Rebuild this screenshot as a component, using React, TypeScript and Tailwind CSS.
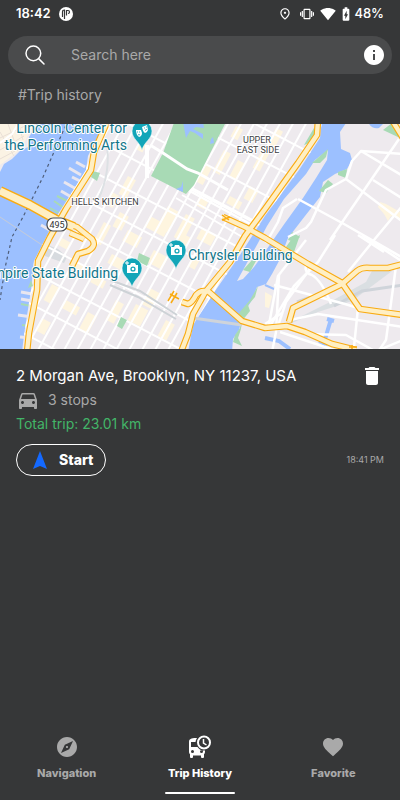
import React, { useState } from 'react';
import {
  MdBatteryChargingFull,
  MdDelete,
  MdDirectionsCar,
  MdExplore,
  MdFavorite,
  MdInfo,
  MdOutlinePlace,
  MdSignalWifi4Bar,
  MdVibration,
} from 'react-icons/md';
import { IoSearchOutline } from 'react-icons/io5';

interface Trip {
  address: string;
  stops: number;
  distance: string;
  time: string;
}

const trip: Trip = {
  address: '2 Morgan Ave, Brooklyn, NY 11237, USA',
  stops: 3,
  distance: '23.01 km',
  time: '18:41 PM',
};

const range = (from: number, to: number, step: number) => {
  const list: number[] = [];
  for (let i = from; i <= to; i += step) list.push(i);
  return list;
};

const manhattan =
  'M106 120 L88 156 L86 170 L58 214 L34 261 L31 290 L24 335 L22 352 L188 352 L193 325 L213 294 L240 255 L265 216 L299 170 L320 138 L322 120 Z';

// [x, y, width, height] of the beige commercial blocks
const blocks = [
  [62, 238, 10, 8], [78, 262, 12, 9], [52, 284, 8, 18], [66, 300, 16, 9], [88, 312, 10, 20],
  [104, 222, 8, 22], [120, 212, 10, 16], [112, 254, 22, 10], [116, 300, 9, 22], [136, 304, 14, 18],
  [128, 230, 16, 12], [150, 216, 22, 12], [168, 206, 12, 24], [186, 214, 10, 26], [202, 228, 16, 12],
  [154, 250, 16, 14], [196, 250, 8, 18], [150, 288, 12, 18], [166, 320, 10, 18], [140, 140, 8, 10],
  [206, 164, 7, 20], [224, 150, 8, 24], [238, 160, 8, 18], [262, 150, 8, 20], [276, 128, 8, 22],
  [128, 176, 9, 20], [112, 192, 8, 14], [42, 318, 10, 14], [230, 196, 14, 8], [250, 186, 10, 14],
  [94, 275, 14, 8], [180, 232, 12, 16], [236, 126, 8, 12], [200, 196, 10, 10],
];

const highways = [
  'M108 120 L94 152 L91 170 L66 209 L50 237 L38 261 L37 290 L29 333 L27 352',
  'M0 191 L30 205 L57 220 L77 227 L92 239 Q97 246 88 251 L78 254 L72 266',
  'M70 233 L84 239',
  'M318 120 L317 135 L298 163 L265 209 L245 236 L230 262 L206 291 L193 314 L188 334 L181 352',
  'M392 120 L403 138',
  'M223 217 L245 227 L265 238 L308 264 L342 283 L360 309 L403 315',
  'M342 284 L357 271 Q362 267 370 268 L388 268 L403 264',
  'M342 284 L293 308 L289 322',
  'M182 302 L188 304 Q192 303 196 295 Q201 289 209 292 L242 321 L265 328 L287 326 L305 332 L332 344 L356 350',
];

const queensRoads = [
  'M288 237 L306 228 L311 222 L326 190 L346 179 L352 161 L361 151 L403 154',
  'M361 151 L403 176', 'M346 179 L403 222', 'M399 139 L330 240', 'M373 180 L403 199',
  'M298 199 L344 224 L403 258', 'M403 205 L374 240 L348 272', 'M335 235 L318 262 L294 286 L270 326',
  'M306 240 L278 276 L268 330', 'M362 235 L403 262', 'M274 285 L345 304 L358 308 L354 347',
  'M279 275 L276 332 L272 352', 'M312 266 L286 302 L278 326', 'M306 265 Q304 273 312 275 Q322 281 331 304',
  'M396 266 L386 340 L378 352', 'M290 320 L318 314 L403 327', 'M305 334 L346 335 L373 350',
  'M280 332 L334 350', 'M265 324 L282 313', 'M403 340 L374 352', 'M358 235 L384 252',
];

const MapPin: React.FC<{ x: number; y: number; kind: 'camera' | 'masks' }> = ({ x, y, kind }) => (
  <g transform={`translate(${x} ${y})`}>
    <path
      d="M0 19 C-2 11 -10 8 -10 0 A10 10 0 0 1 10 0 C10 8 2 11 0 19 Z"
      fill="#12a5b8"
      stroke="#e8f6f8"
      strokeWidth="0.6"
    />
    {kind === 'camera' ? (
      <>
        <path d="M-5 -3 H-2 L-1 -5 H3 L4 -3 H6 V5 H-5 Z" fill="#fff" />
        <circle cx="1" cy="1" r="2.6" fill="#12a5b8" />
        <circle cx="1" cy="1" r="1.3" fill="#fff" />
        <path d="M-5 -7 V-3 M-7 -5 H-3" stroke="#fff" strokeWidth="1" />
      </>
    ) : (
      <>
        <path d="M0 -4 L5 -6 L6 -1 Q5 2 3 2 Q1 1 0 -4 Z" fill="#fff" />
        <path d="M-6 -1 H-1 L0 2 Q0 5 -3 6 Q-6 4 -6 -1 Z" fill="#fff" />
        <path d="M-5 1 h1 M-3 1 h1 M-4 4 q1 -1 2 0 M2 -3 h1 M4 -4 h1 M3 -1 q1 1 2 -1" stroke="#12a5b8" strokeWidth="0.8" fill="none" />
      </>
    )}
  </g>
);

const TripMap: React.FC = () => (
  <svg
    viewBox="0 124 400 225"
    className="block w-full font-['Roboto','Liberation_Sans',sans-serif]"
    role="img"
    aria-label="Map of the trip"
  >
    <defs>
      <clipPath id="manhattan">
        <path d={manhattan} />
      </clipPath>
    </defs>

    <rect x="0" y="120" width="400" height="232" fill="#eeeaee" />

    {/* water */}
    <path d="M38 120 L36 126 L29 137 L28 147 L20 151 L12 159 L4 164 L0 172 V352 H140 V120 Z" fill="#9cc0ff" />
    <path
      d="M321 120 H348 L340 132 L341 149 L350 153 L352 160 L347 169 L335 174 L323 182 L320 197 L305 216 L288 238 L279 261 L272 274 L266 284 L257 287 L252 300 L243 314 L239 330 L233 339 L232 352 H185 L188 320 L213 285 L290 170 L321 130 Z"
      fill="#9cc0ff"
    />
    <path d="M367 120 Q371 130 379 128 L387 120 Z" fill="#9cc0ff" />
    <path d="M265 338 L279 341 L290 349 M323 346 L331 319 M327 319 L334 321 M319 341 L328 344" stroke="#9cc0ff" strokeWidth="4" fill="none" />
    <path d="M265 285 L274 289" stroke="#9cc0ff" strokeWidth="2" />

    {/* New Jersey shore */}
    <path d="M0 120 H36 L27 137 L22 148 L12 156 L0 165 Z" fill="#fbf3e4" />
    <g stroke="#e9dfd6" strokeWidth="1" fill="none">
      <path d="M0 138 L29 124 M0 150 L24 136 M0 132 L14 156 M8 124 L18 151 M18 122 L23 140 M0 159 L15 151" />
      <path d="M0 143 L12 134 L20 121" stroke="#fff" strokeWidth="2" />
    </g>
    <path d="M0 217 L42 245" stroke="#c5cbd8" strokeWidth="1" />
    <path d="M68 120 L43 177 L23 217 L12 237 L5 268 L0 300" stroke="#4f5e7a" strokeWidth="1.2" strokeDasharray="3 3" fill="none" />

    {/* Roosevelt Island */}
    <path d="M328 150 L315 160 L306 174 L284 199 L267 226 L258 243 L237 281 L243 279 L254 267 L262 256 L285 223 L303 198 L316 178 L327 160 Z" fill="#eeeaee" />
    <path d="M328 149 L312 163 L320 163 L326 157 Z M252 260 L243 270 L250 272 L256 261 Z" fill="#a8dab5" />
    <path d="M266 243 L278 222 L283 208 L297 199" stroke="#fff" strokeWidth="2.5" fill="none" />

    {/* piers */}
    <g stroke="#e9e6ef" strokeWidth="3">
      <path d="M76 162 L85 167 M69 168 L81 175 M72 177 L82 182 M64 182 L78 190 M61 191 L73 198 M41 225 L53 232 M21 292 L32 294 M21 299 L32 301 M18 315 L32 317 M20 337 L31 338" />
    </g>
    <path d="M57 196 L69 202 M54 201 L64 208 M50 208 L59 213 M21 304 L31 306 M22 325 L28 326" stroke="#a8dab5" strokeWidth="2" />

    {/* Manhattan */}
    <path d={manhattan} fill="#eeeaee" />
    <g clipPath="url(#manhattan)">
      {blocks.map(([x, y, w, h], index) => (
        <rect key={index} x={x} y={y} width={w} height={h} fill="#fef5df" transform={`rotate(28 ${x} ${y})`} />
      ))}
      <path d="M45 244 L58 249 L67 257 L64 263 L45 256 Z" fill="#d7dbdf" />
      <g stroke="#fff" strokeWidth="2">
        {range(-80, 310, 13).map((x) => (
          <path key={x} d={`M${x} 352 L${x + 128} 120`} />
        ))}
      </g>
      <g stroke="#fff" strokeWidth="2">
        {range(-42, 346, 33).map((y) => (
          <path key={y} d={`M0 ${y} L330 ${y + 172}`} />
        ))}
        <path d="M184 184 L258 223 M186 189 L254 226 M182 195 L248 232 M176 198 L244 238" />
      </g>
      <path d="M110 280 L140 291 L177 315 M110 285 L138 297 L176 319" stroke="#cdd2d6" strokeWidth="2" fill="none" />
      <path d="M106 140 Q112 170 98 200" stroke="#dde1e4" strokeWidth="2" fill="none" />
    </g>
    <path d="M147 145 V178" stroke="#fff" strokeWidth="4" />

    {/* parks */}
    <path d="M175 120 H227 L194 185 L186 194 L151 176 L163 153 Z" fill="#a8dab5" />
    <path d="M183 122 H203 L204 128 L196 127 L193 129 L203 134 L203 139 L195 133 L190 131 L186 138 Z M213 137 L214 143 L210 144 L211 139 Z M183 181 L183 192 L176 189 L181 187 Z" fill="#9cc0ff" />
    <path d="M150 145 L163 153 L187 169 L198 173 L228 190" stroke="#fff" strokeWidth="3" fill="none" />
    <path d="M93 171 L100 173 L97 181 L91 177 Z M121 317 L127 320 L122 329 L117 326 Z M139 253 L150 258 L147 266 L137 261 Z M304 145 L314 128 V136 L307 144 Z M328 180 L333 184 L326 193 L319 191 Z M338 172 L347 169 L346 178 L338 175 Z M292 232 L300 237 L295 242 L288 240 Z M383 130 L392 123 L400 138 Z M291 240 L300 235 L294 252 L286 247 Z" fill="#a8dab5" />
    <path d="M31 280 L33 286 L28 288 Z M258 286 L255 297 L248 305 L250 311 L242 321 L241 329 L238 338 L242 346 L233 342 L235 335 L240 328 L239 313 L250 300 Z" fill="#a8dab5" />

    {/* rail yards */}
    <path d="M290 322 L328 303 L366 282 L372 271 L392 271 L352 301 L318 312 L287 325 Z" fill="#dadfe2" />
    <path d="M334 306 L362 291 L403 285 M297 302 L325 292 M193 318 L242 325" stroke="#cfd4da" strokeWidth="3" fill="none" />
    <path d="M380 202 L386 204 L400 212 L400 219 L391 216 L388 221 L384 214 L378 207 Z M265 292 L272 296 L269 308 L265 307 Z" fill="#fef5df" />

    <g stroke="#fff" strokeWidth="2.5" fill="none" strokeLinejoin="round">
      {queensRoads.map((d) => (
        <path key={d} d={d} />
      ))}
    </g>

    {/* highways */}
    <g stroke="#f9ab12" strokeWidth="6.6" fill="none" strokeLinejoin="round">
      {highways.map((d) => (
        <path key={d} d={d} />
      ))}
      <path d="M0 191 L30 205 L57 220 L74 227" strokeWidth="10" />
    </g>
    <g stroke="#ffefc3" strokeWidth="4.4" fill="none" strokeLinejoin="round">
      {highways.map((d) => (
        <path key={d} d={d} />
      ))}
      <path d="M0 191 L30 205 L57 220 L74 227" strokeWidth="7" />
    </g>
    <path d="M168 301 L174 291 M171 303 L177 293 M170 294 L179 299 M222 215 L229 220 M222 220 L230 217 M352 345 V350 M349 347 H357" stroke="#f9ab12" strokeWidth="1.5" fill="none" />

    <MapPin x={142} y={131} kind="masks" />
    <MapPin x={176} y={250} kind="camera" />
    <MapPin x={132} y={268} kind="camera" />

    <rect x="47" y="218" width="20" height="13" rx="6" fill="#fff" stroke="#4a4f55" strokeWidth="1.2" />
    <text x="57" y="228" fontSize="9" textAnchor="middle" fill="#333">495</text>

    <g fontSize="14" fill="#11758a" stroke="#fff" strokeWidth="2" strokeLinejoin="round" paintOrder="stroke">
      <text x="127" y="133" textAnchor="end">Lincoln Center for</text>
      <text x="127" y="150" textAnchor="end">the Performing Arts</text>
      <text x="118" y="278" textAnchor="end">Empire State Building</text>
      <text x="188" y="260">Chrysler Building</text>
    </g>
    <g fontSize="9" fill="#3c4043" stroke="#fff" strokeWidth="2" strokeLinejoin="round" paintOrder="stroke" textAnchor="middle">
      <text x="105" y="205">HELL'S KITCHEN</text>
      <text x="257" y="143">UPPER</text>
      <text x="258" y="153">EAST SIDE</text>
    </g>
  </svg>
);

const BusClockIcon: React.FC = () => (
  <svg viewBox="0 0 24 24" className="h-6 w-6" aria-hidden="true">
    <path
      d="M8 3 C3 3 1 4 1 7 V17 C1 18 1.4 18.7 2 19.2 V22 Q2 23 3 23 H4 Q5 23 5 22 V20.5 H13 V22 Q13 23 14 23 H15 Q16 23 16 22 V19.2 C16.6 18.7 17 18 17 17 V15.5 A8 8 0 0 1 9.5 12 H3 V7 H7.5 A8 8 0 0 1 9 3 Z M4.500 15 A1.500 1.500 0 1 1 4.500 18 A1.500 1.500 0 1 1 4.500 15 Z M13.500 15 A1.500 1.500 0 1 1 13.500 18 A1.500 1.500 0 1 1 13.500 15 Z"
      fill="currentColor"
      fillRule="evenodd"
    />
    <circle cx="16" cy="7.5" r="6" fill="none" stroke="currentColor" strokeWidth="2" />
    <path d="M15.5 4 V8 L18.5 10" fill="none" stroke="currentColor" strokeWidth="1.5" />
  </svg>
);

const tabs = [
  { name: 'Navigation', icon: <MdExplore className="h-6 w-6" /> },
  { name: 'Trip History', icon: <BusClockIcon /> },
  { name: 'Favorite', icon: <MdFavorite className="h-6 w-6" /> },
];

const App: React.FC = () => {
  const [search, setSearch] = useState('');
  const [activeTab, setActiveTab] = useState('Trip History');

  return (
    <div className="flex min-h-screen flex-col bg-[#363738] font-['Inter','Liberation_Sans',sans-serif] text-white">
      <div className="flex h-7 items-center justify-between px-4 text-[13px]">
        <div className="flex items-center gap-2">
          <span className="font-semibold">18:42</span>
          <svg viewBox="0 0 14 14" className="h-3.5 w-3.5" aria-hidden="true">
            <circle cx="7" cy="7" r="7" fill="#fff" />
            <path d="M3.5 10 V5 Q3.500 3 5.500 3 V12 M7.500 8.500 V3.500 H9 Q10.500 3.500 10.500 5 Q10.500 6.500 9 6.500" fill="none" stroke="#363738" strokeWidth="1.2" />
          </svg>
        </div>
        <div className="flex items-center">
          <MdOutlinePlace className="mr-2 h-3.5 w-3.5" />
          <MdVibration className="mr-1.5 h-3.5 w-3.5" />
          <MdSignalWifi4Bar className="mr-0.5 h-4 w-4" />
          <MdBatteryChargingFull className="h-4 w-4" />
          <span className="font-medium">48%</span>
        </div>
      </div>

      <header className="px-2 pt-2">
        <div className="flex h-[38px] items-center rounded-full bg-[#4a4b4c] pr-1.5 pl-[15px]">
          <IoSearchOutline className="h-6 w-6" />
          <input
            type="search"
            aria-label="Search here"
            placeholder="Search here"
            value={search}
            onChange={(e) => setSearch(e.target.value)}
            className="ml-6 min-w-0 flex-1 bg-transparent text-sm outline-0 placeholder:text-[#a9a9a9]"
          />
          <button type="button" aria-label="Information">
            <MdInfo className="h-6 w-6" />
          </button>
        </div>
      </header>

      <main className="flex-1">
        <h1 className="px-4.5 pt-3 pb-5 text-sm leading-[18px] text-[#a9a9a9]">#Trip history</h1>
        <article>
          <TripMap />
          <div className="px-4 pt-[15px]">
            <div className="flex h-6 items-center justify-between">
              <h2 className="text-[15px]">{trip.address}</h2>
              <button type="button" aria-label="Delete trip">
                <MdDelete className="h-6 w-6" />
              </button>
            </div>
            <p className="flex h-6 items-center gap-2 text-sm text-[#a9a9a9]">
              <MdDirectionsCar className="h-6 w-6" />
              {trip.stops} stops
            </p>
            <p className="h-6 text-sm leading-6 text-[#43b568]">Total trip: {trip.distance}</p>
            <div className="mt-2 flex items-center justify-between">
              <button
                type="button"
                className="flex h-8 items-center gap-3 rounded-full border border-white px-4 pr-3 text-sm font-extrabold"
              >
                <svg viewBox="0 0 14 18" className="h-[18px] w-3.5" aria-hidden="true">
                  <path d="M7 0 L14 18 L7 15 L0 18 Z" fill="#1469ff" />
                </svg>
                Start
              </button>
              <time className="text-[9px] text-[#a9a9a9]">{trip.time}</time>
            </div>
          </div>
        </article>
      </main>

      <nav className="grid grid-cols-3 pb-1.5">
        {tabs.map((tab) => (
          <button
            key={tab.name}
            type="button"
            onClick={() => setActiveTab(tab.name)}
            className={`flex flex-col items-center text-[11px] font-extrabold ${activeTab === tab.name ? 'text-white' : 'text-[#a9a9a9]'}`}
          >
            {tab.icon}
            <span className="mt-1.5 leading-4">{tab.name}</span>
            <span className={`mt-[11px] h-0.5 w-[70px] rounded-full ${activeTab === tab.name && 'bg-white'}`}></span>
          </button>
        ))}
      </nav>
    </div>
  );
};

export default App;
